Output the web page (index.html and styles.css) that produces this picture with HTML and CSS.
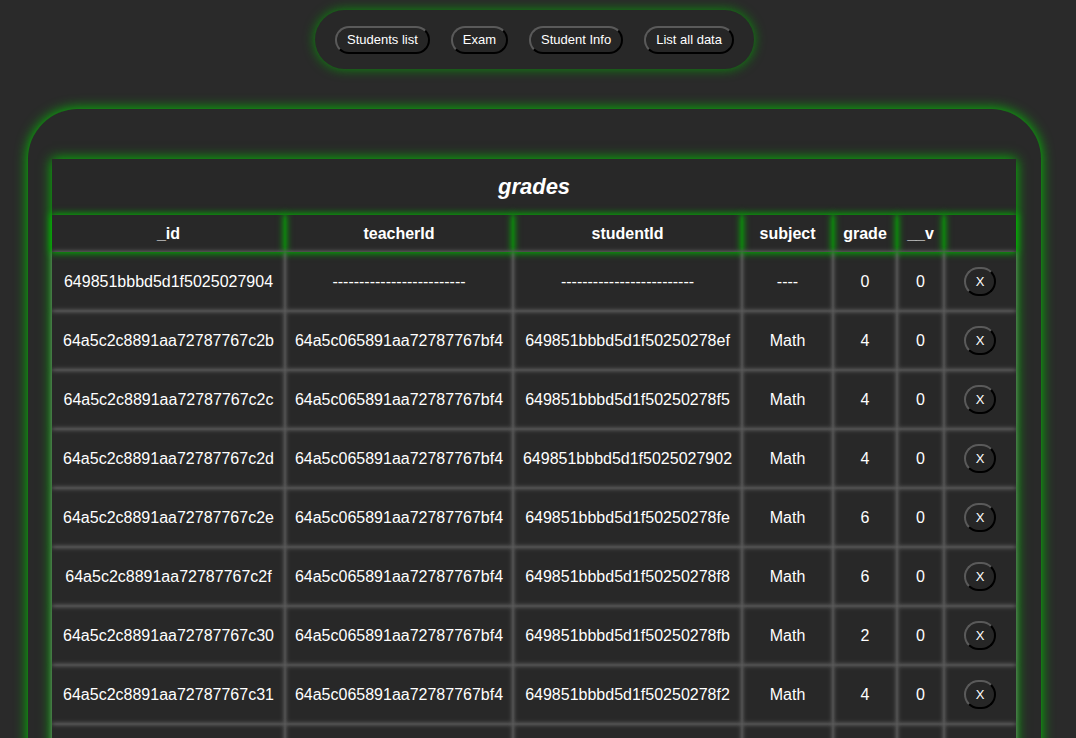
FILE: index.html
```html
<!DOCTYPE html>
<html lang="en">
<head>
<meta charset="utf-8">
<title>grades</title>
<link rel="stylesheet" href="styles.css">
</head>
<body>
<div class="page">
  <nav class="nav">
    <button class="btn">Students list</button>
    <button class="btn">Exam</button>
    <button class="btn">Student Info</button>
    <button class="btn">List all data</button>
  </nav>
  <main class="panel">
    <table class="grid">
      <colgroup>
        <col class="c-id"><col class="c-teacher"><col class="c-student"><col class="c-subject"><col class="c-grade"><col class="c-v"><col class="c-act">
      </colgroup>
      <thead>
        <tr><th class="title" colspan="7">grades</th></tr>
        <tr class="heads">
          <th>_id</th><th>teacherId</th><th>studentId</th><th>subject</th><th>grade</th><th>__v</th><th></th>
        </tr>
      </thead>
      <tbody>
        <tr><td>649851bbbd5d1f5025027904</td><td>-------------------------</td><td>-------------------------</td><td>----</td><td>0</td><td>0</td><td><button class="btn">X</button></td></tr>
        <tr><td>64a5c2c8891aa72787767c2b</td><td>64a5c065891aa72787767bf4</td><td>649851bbbd5d1f50250278ef</td><td>Math</td><td>4</td><td>0</td><td><button class="btn">X</button></td></tr>
        <tr><td>64a5c2c8891aa72787767c2c</td><td>64a5c065891aa72787767bf4</td><td>649851bbbd5d1f50250278f5</td><td>Math</td><td>4</td><td>0</td><td><button class="btn">X</button></td></tr>
        <tr><td>64a5c2c8891aa72787767c2d</td><td>64a5c065891aa72787767bf4</td><td>649851bbbd5d1f5025027902</td><td>Math</td><td>4</td><td>0</td><td><button class="btn">X</button></td></tr>
        <tr><td>64a5c2c8891aa72787767c2e</td><td>64a5c065891aa72787767bf4</td><td>649851bbbd5d1f50250278fe</td><td>Math</td><td>6</td><td>0</td><td><button class="btn">X</button></td></tr>
        <tr><td>64a5c2c8891aa72787767c2f</td><td>64a5c065891aa72787767bf4</td><td>649851bbbd5d1f50250278f8</td><td>Math</td><td>6</td><td>0</td><td><button class="btn">X</button></td></tr>
        <tr><td>64a5c2c8891aa72787767c30</td><td>64a5c065891aa72787767bf4</td><td>649851bbbd5d1f50250278fb</td><td>Math</td><td>2</td><td>0</td><td><button class="btn">X</button></td></tr>
        <tr><td>64a5c2c8891aa72787767c31</td><td>64a5c065891aa72787767bf4</td><td>649851bbbd5d1f50250278f2</td><td>Math</td><td>4</td><td>0</td><td><button class="btn">X</button></td></tr>
        <tr><td></td><td></td><td></td><td></td><td></td><td></td><td></td></tr>
      </tbody>
    </table>
  </main>
</div>
</body>
</html>
```

FILE: styles.css
```css
html {
  background: #2a2a2a;
  scrollbar-width: none;
}
body {
  margin: 0;
  padding: 10px 0 0;
  background: #2a2a2a;
  color: #fff;
  font-family: "Liberation Sans", Arial, sans-serif;
}
.page {
  width: 1013px;
  margin-left: 28px;
}
.nav {
  display: flex;
  gap: 21px;
  align-items: center;
  width: fit-content;
  margin: 0 auto;
  padding: 0 20px;
  height: 59px;
  box-sizing: border-box;
  border-radius: 30px;
  background: #282828;
  box-shadow: 0 0 12px #0a900a;
}
.btn {
  font-family: "Liberation Sans", Arial, sans-serif;
  font-size: 13px;
  line-height: 15px;
  color: #fff;
  background: #262626;
  height: 28px;
  padding: 0 10px;
  border: 2px solid;
  border-color: #5a5a5a #000 #000 #5a5a5a;
  border-radius: 15px;
  cursor: pointer;
}
.grid .btn {
  height: 29px;
  vertical-align: middle;
}
.panel {
  margin-top: 40px;
  padding: 50px 25px 0 24px;
  border-radius: 50px;
  background: #292929;
  box-shadow: 0 0 13px #0c0;
  height: 900px;
  box-sizing: border-box;
}
.grid {
  width: 964px;
  table-layout: fixed;
  border-collapse: separate;
  border-spacing: 0;
  background: #282828;
  box-shadow: 0 0 12px #0c0;
}
.c-id { width: 233px; }
.c-teacher { width: 228px; }
.c-student { width: 229px; }
.c-subject { width: 91px; }
.c-grade { width: 64px; }
.c-v { width: 47px; }
.c-act { width: 72px; }
.grid th, .grid td {
  padding: 0;
  text-align: center;
  vertical-align: middle;
  font-size: 16px;
  white-space: nowrap;
}
.grid th.title {
  height: 56px;
  font-size: 22px;
  font-style: italic;
  font-weight: bold;
  box-shadow: none;
}
.heads th {
  height: 37px;
  font-weight: bold;
  box-shadow: 0 0 7px 1px #0b0;
}
.grid td {
  height: 59px;
  box-shadow: 0 0 5px #808080;
}
```
